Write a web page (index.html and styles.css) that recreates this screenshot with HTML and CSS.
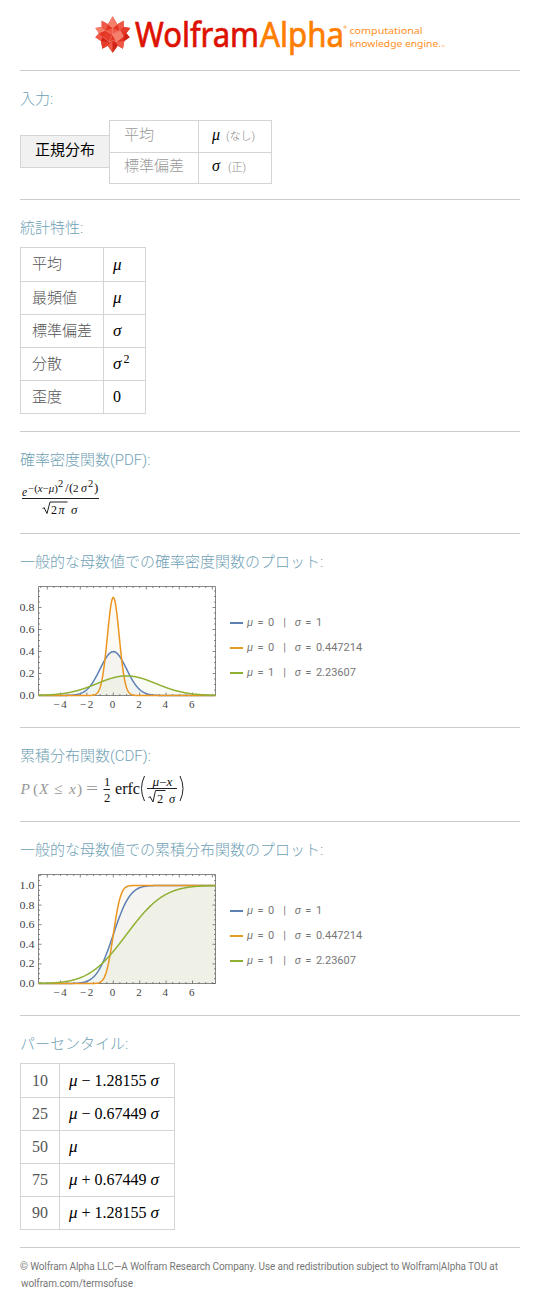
FILE: index.html
```html
<!DOCTYPE html>
<html lang="ja">
<head>
<meta charset="utf-8">
<title>Wolfram|Alpha</title>
<link rel="stylesheet" href="styles.css">
</head>
<body>
<header class="brand">
<svg width="540" height="70" viewBox="0 0 540 70" role="img" aria-label="WolframAlpha">
  <g transform="translate(85 5) scale(.3333)">
    <path fill="#e23322" d="M83 34 97 58 116 47 116 66 136 69 124 85 134 97 118 108 114 131 98 122 83 143 68 122 52 131 48 108 31 97 42 85 31 69 50 66 50 47 69 58Z"/>
    <path fill="#f4806c" d="M83 34 97 58 83 69 69 58Z M31 69 50 66 62 77 42 85Z M83 88 107 76 116 94 94 111Z"/>
    <path fill="#ee5a47" d="M50 47 69 58 62 77 50 66Z M116 47 116 66 103 77 97 58Z M83 69 103 77 83 88 62 77Z M31 97 42 85 54 96 48 108Z M118 108 94 111 98 122 114 131Z M83 143 83 106 68 122Z"/>
    <path fill="#e53c2b" d="M136 69 124 85 107 76 116 66Z M62 77 83 88 73 111 54 96Z M52 131 48 108 73 111 68 122Z"/>
    <path fill="#cf2317" d="M134 97 118 108 116 94 124 85Z M83 143 83 106 98 122Z M54 96 73 111 48 108Z"/>
    <path fill="none" stroke="#f79a8b" stroke-width="1.500" d="M69 58 83 69 97 58 M83 69V88L62 77 M83 88 103 77 M83 88 94 111 M83 88 73 111 M54 96 73 111 83 106 94 111 116 94"/>
  </g>
  <text class="logo red" x="135" y="47" textLength="124" lengthAdjust="spacingAndGlyphs">Wolfram</text>
  <text class="logo orange" x="260" y="47" textLength="84" lengthAdjust="spacingAndGlyphs">Alpha</text>
  <circle cx="345" cy="27" r="1.2" fill="none" stroke="#ff9a35" stroke-width=".7"/>
  <text class="tagline" x="349.500" y="34" textLength="73" lengthAdjust="spacingAndGlyphs">computational</text>
  <text class="tagline" x="349.500" y="46.500" textLength="91.500" lengthAdjust="spacingAndGlyphs">knowledge engine.</text>
  <path d="M442 46h2.500" stroke="#ffb066"/>
</svg>
</header>
<main>
<section class="pod input">
  <h2>入力:</h2>
  <div class="distribution">
    <div class="dist-name">正規分布</div>
    <table class="params">
      <tr><td>平均</td><td><i>μ</i><small>(なし)</small></td></tr>
      <tr><td>標準偏差</td><td><i>σ</i><small class="wide">(正)</small></td></tr>
    </table>
  </div>
</section>
<section class="pod stats">
  <h2>統計特性:</h2>
  <table class="grid properties">
    <tr><td>平均</td><td><i>μ</i></td></tr>
    <tr><td>最頻値</td><td><i>μ</i></td></tr>
    <tr><td>標準偏差</td><td><i>σ</i></td></tr>
    <tr><td>分散</td><td><i>σ</i><sup>2</sup></td></tr>
    <tr><td>歪度</td><td>0</td></tr>
  </table>
</section>
<section class="pod pdf">
  <h2>確率密度関数(PDF):</h2>
  <svg class="formula" width="100" height="44" viewBox="20 476 100 44">
    <g class="math">
      <text x="22" y="496" font-size="11.500" class="it">e</text>
      <text x="28" y="491.500" font-size="10" textLength="30" lengthAdjust="spacingAndGlyphs">−(<tspan class="it">x</tspan>−<tspan class="it">μ</tspan>)</text>
      <text x="58" y="487" font-size="10.500">2</text>
      <text x="65" y="492" font-size="13">/</text>
      <text x="69" y="492" font-size="13">(</text>
      <text x="73" y="491.500" font-size="11">2</text>
      <text x="81" y="491.500" font-size="12" class="it">σ</text>
      <text x="88" y="487" font-size="10.500">2</text>
      <text x="94" y="492" font-size="13">)</text>
      <path d="M22 498.500H99M42.500 509l1.500-1.500 3 6 3-11.500h17.500"/>
      <text x="51" y="514" font-size="12">2</text>
      <text x="58.500" y="514" font-size="12" class="it">π</text>
      <text x="71" y="514" font-size="13" class="it">σ</text>
    </g>
  </svg>
</section>
<section class="pod plot">
  <h2>一般的な母数値での確率密度関数のプロット:</h2>
  <div class="chart-row">
    <svg class="chart" id="pdf" width="200" height="130" viewBox="18 584 200 130"></svg>
    <ul class="legend">
      <li class="blue"><i>μ</i> = 0 &nbsp;|&nbsp; <i>σ</i> = 1</li>
      <li class="gold"><i>μ</i> = 0 &nbsp;|&nbsp; <i>σ</i> = 0.447214</li>
      <li class="green"><i>μ</i> = 1 &nbsp;|&nbsp; <i>σ</i> = 2.23607</li>
    </ul>
  </div>
</section>
<section class="pod cdf">
  <h2>累積分布関数(CDF):</h2>
  <svg class="formula" width="180" height="40" viewBox="20 770 180 40">
    <g class="math">
      <text x="20.500" y="793.500" font-size="15.500" class="it muted">P</text>
      <text x="33" y="793.500" font-size="15.500" class="muted">(</text>
      <text x="39" y="793.500" font-size="15.500" class="it muted">X</text>
      <text x="54" y="793.500" font-size="15.500" class="muted">≤</text>
      <text x="69" y="793.500" font-size="15.500" class="it muted">x</text>
      <text x="77" y="793.500" font-size="15.500" class="muted">)</text>
      <text x="86" y="793.500" font-size="16" class="muted" textLength="12" lengthAdjust="spacingAndGlyphs">=</text>
      <text x="104" y="786" font-size="12.500">1</text>
      <text x="104" y="801.500" font-size="12.500">2</text>
      <text x="115" y="793.500" font-size="16" textLength="25" lengthAdjust="spacingAndGlyphs">erfc</text>
      <path d="M103.500 789.500h6.500M147 788.500h30M148.500 798l1.500-1.500 3 5.500 2.500-11.500h10"/>
      <path stroke-width="1.300" d="M144.500 776q-6 12.500 0 25M180 776q6 12.500 0 25"/>
      <text x="152.500" y="785.500" font-size="11.500" textLength="20" lengthAdjust="spacingAndGlyphs"><tspan class="it">μ</tspan>−<tspan class="it">x</tspan></text>
      <text x="157" y="803" font-size="12.500">2</text>
      <text x="169" y="803" font-size="12.500" class="it">σ</text>
    </g>
  </svg>
</section>
<section class="pod plot">
  <h2>一般的な母数値での累積分布関数のプロット:</h2>
  <div class="chart-row">
    <svg class="chart" id="cdf" width="200" height="130" viewBox="18 872 200 130"></svg>
    <ul class="legend">
      <li class="blue"><i>μ</i> = 0 &nbsp;|&nbsp; <i>σ</i> = 1</li>
      <li class="gold"><i>μ</i> = 0 &nbsp;|&nbsp; <i>σ</i> = 0.447214</li>
      <li class="green"><i>μ</i> = 1 &nbsp;|&nbsp; <i>σ</i> = 2.23607</li>
    </ul>
  </div>
</section>
<section class="pod percentiles">
  <h2>パーセンタイル:</h2>
  <table class="grid percent">
    <tr><td>10</td><td><i>μ</i> − 1.28155 <i>σ</i></td></tr>
    <tr><td>25</td><td><i>μ</i> − 0.67449 <i>σ</i></td></tr>
    <tr><td>50</td><td><i>μ</i></td></tr>
    <tr><td>75</td><td><i>μ</i> + 0.67449 <i>σ</i></td></tr>
    <tr><td>90</td><td><i>μ</i> + 1.28155 <i>σ</i></td></tr>
  </table>
</section>
</main>
<footer class="foot">
  <svg width="500" height="50" viewBox="20 1248 500 50">
    <text x="20" y="1270" textLength="478">© Wolfram Alpha LLC—A Wolfram Research Company. Use and redistribution subject to Wolfram|Alpha TOU at</text>
    <text x="21" y="1287" textLength="112">wolfram.com/termsofuse</text>
  </svg>
</footer>
<script src="charts.js"></script>
</body>
</html>
```
FILE: styles.css
```css
* { box-sizing: border-box; }
body { margin: 0; width: 540px; background: #fff; color: #000; font-family: Roboto, "Noto Sans CJK JP", sans-serif; font-size: 15px; }
svg { display: block; }
.brand { height: 70px; }
.logo { font: 400 34.5px "Noto Sans", sans-serif; stroke-width: .7px; }
.red { fill: #dd1100; stroke: #dd1100; }
.orange { fill: #ff7e00; stroke: #ff7e00; }
.tagline { font: 9.5px "Noto Sans", sans-serif; fill: #ff8f26; }
.pod { margin: 0 20px; border-top: 1px solid #ccc; overflow: hidden; }
.pod h2 { margin: 17px 0 0; height: 23px; line-height: 22px; font-size: 15px; font-weight: 300; color: #70a1b5; white-space: nowrap; }
.input { height: 129px; }
.stats, .percentiles { height: 232px; }
.pdf { height: 102px; }
.plot { height: 194px; }
.cdf { height: 94px; }
table { border-collapse: collapse; }
td { border: 1px solid #d5d5d5; padding: 0; white-space: nowrap; }
.distribution { display: flex; align-items: center; margin-top: 9px; }
.dist-name { width: 89px; height: 33px; line-height: 29px; padding-left: 14px; background: #f1f1f1; border: 1px solid #d5d5d5; border-right: 0; margin-top: -1px; }
.params { width: 163px; height: 64px; }
.params td { height: 31px; line-height: 27px; padding-bottom: 2px; color: #999; font-weight: 300; }
.params td:first-child { width: 89px; padding-left: 14px; }
.params td:last-child { padding-left: 13px; }
.params i, .grid i { font-family: "Liberation Serif", serif; font-weight: 400; font-size: 17px; color: #000; line-height: 16px; }
.params i { font-size: 16px; }
.params small { font-size: 11px; line-height: 16px; margin-left: 6px; color: #888; }
.params small.wide { margin-left: 8px; }
.grid { margin-top: 7px; }
.grid td { height: 33px; line-height: 29px; padding: 0 0 1px 9px; font-family: "Liberation Serif", "Noto Sans CJK JP", serif; font-size: 16px; }
.grid tr:first-child td { height: 34px; }
.grid td:first-child { padding-left: 11px; color: #555; }
.properties { width: 126px; }
.grid.properties td:first-child { width: 83px; padding-bottom: 3px; line-height: 28px; font-family: "Noto Sans CJK JP", sans-serif; font-size: 15px; font-weight: 300; }
.properties sup { font-size: 12px; line-height: 0; vertical-align: 6px; margin-left: 2px; }
.percent { width: 155px; }
.percent td:first-child { width: 39px; }
.pdf .formula { margin-top: 4px; }
.cdf .formula { margin-top: 2px; }
.math { font-family: "Liberation Serif", serif; fill: #111; }
.math path { fill: none; stroke: #222; stroke-width: 1; }
.it { font-style: italic; }
.math .muted { fill: #999; }
.chart-row { display: flex; margin: 10px 0 0 -2px; }
.chart text { font: 11px "Liberation Serif", serif; fill: #444; }
.legend { list-style: none; margin: 26px 0 0 12px; padding: 0; }
.legend li { display: flex; align-items: center; height: 25px; font-size: 11px; color: #777; white-space: pre; word-spacing: 1.75px; }
.legend li::before { content: ""; width: 13px; height: 2px; margin-right: 4px; background: currentColor; }
.legend .blue::before { background: #5e81b5; }
.legend .gold::before { background: #e19c24; }
.legend .green::before { background: #8fb032; }
.foot { margin: 0 20px; border-top: 1px solid #ccc; }
.foot text { font: 10px Roboto, sans-serif; fill: #777; }
```
FILE: charts.js
```js
const series = [
  { mu: 0, s: 1, color: "#5e81b5", fill: "#5e81b5" },
  { mu: 0, s: 0.447214, color: "#eb9520", fill: "#e19c24" },
  { mu: 1, s: 2.23607, color: "#8fb032", fill: "#8fb032" }
];
const x0 = 113.3, ux = 13.2, left = 38.5, right = 215.5;

function pdf(x, d) {
  return Math.exp(-((x - d.mu) ** 2) / (2 * d.s * d.s)) / (d.s * Math.sqrt(2 * Math.PI));
}
function cdf(x, d) {
  const z = (x - d.mu) / d.s, a = Math.abs(z), t = 1 / (1 + 0.2316419 * a);
  const tail = Math.exp(-a * a / 2) / Math.sqrt(2 * Math.PI) *
    t * (0.31938153 + t * (-0.356563782 + t * (1.781477937 + t * (-1.821255978 + t * 1.330274429))));
  return z > 0 ? 1 - tail : tail;
}
function draw(id, fn, top, base, uy, labels, minor) {
  let areas = "", lines = "", ticks = "", text = "";
  for (const d of series) {
    let p = "";
    for (let x = left; x <= right; x += 0.5)
      p += (p ? "L" : "M") + x + " " + (base - uy * fn((x - x0) / ux, d)).toFixed(2);
    areas += `<path d="${p}V${base}H${left}Z" fill="${d.fill}" fill-opacity=".05"/>`;
    lines += `<path d="${p}" fill="none" stroke="${d.color}" stroke-width="1.5"/>`;
  }
  for (let i = -11; i <= 15; i++) {
    const x = x0 + i * ux / 2, n = i % 5 === 0 ? 3 : 1.5;
    ticks += `M${x} ${top}v${n}`;
  }
  for (let i = -11; i <= 15; i++) {
    const n = i % 4 === 0 ? 3 : 1.5;
    ticks += `M${x0 + i * ux / 2} ${base}v${-n}`;
  }
  for (let i = 0; base - i * minor * uy > top; i++) {
    const y = base - i * minor * uy, n = i % 4 === 0 ? 3 : 1.5;
    ticks += `M${left} ${y}h${n}M${right} ${y}h${-n}`;
  }
  for (const v of labels)
    text += `<text x="34.500" y="${base - v * uy + 3.5}" text-anchor="end" textLength="15" lengthAdjust="spacingAndGlyphs">${v.toFixed(1)}</text>`;
  for (const v of [-4, -2, 0, 2, 4, 6])
    text += `<text x="${x0 + v * ux - (v < 0 ? 0.5 : 0.8)}" y="${base + 12.5}" text-anchor="middle"${v < 0 ? ' textLength="13.500"' : ""}>${v < 0 ? "−" + -v : v}</text>`;
  document.getElementById(id).innerHTML = areas +
    `<path d="M${left} ${top}H${right}V${base}H${left}Z${ticks}" fill="none" stroke="#555" stroke-width=".7"/>` + lines + text;
}
draw("pdf", pdf, 586.5, 695.5, 110, [0, 0.2, 0.4, 0.6, 0.8], 0.05);
draw("cdf", cdf, 874.5, 983.5, 98, [0, 0.2, 0.4, 0.6, 0.8, 1], 0.05);
```
